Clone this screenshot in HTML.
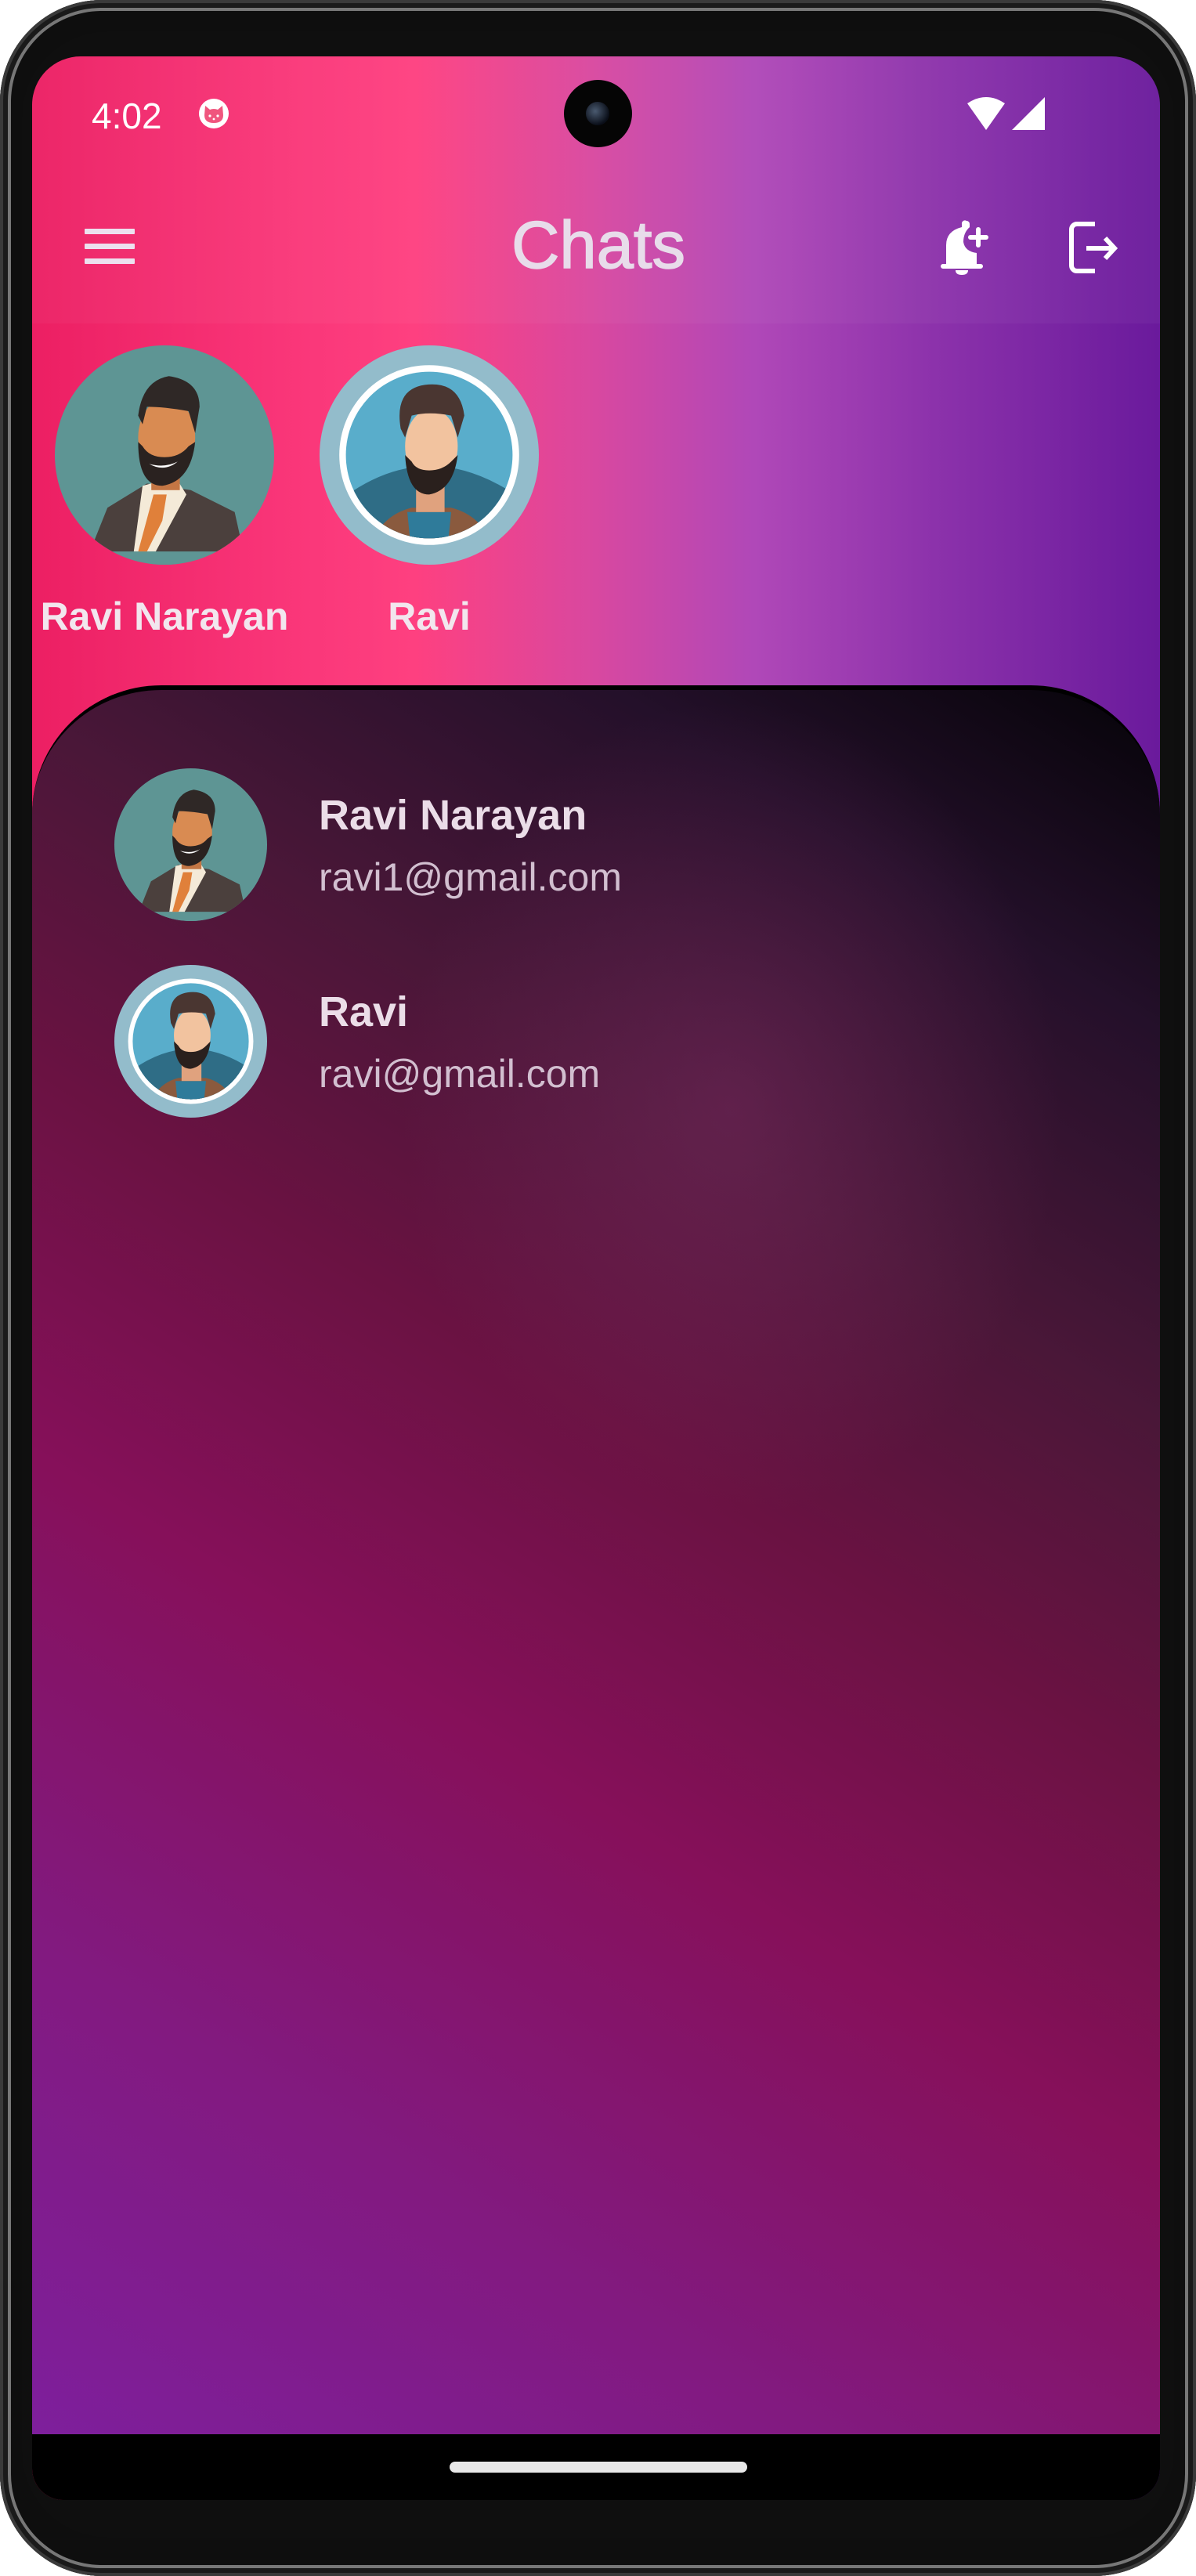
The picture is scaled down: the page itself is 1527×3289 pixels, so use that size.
<!DOCTYPE html>
<html><head><meta charset="utf-8">
<style>
*{margin:0;padding:0;box-sizing:border-box}
html,body{width:1527px;height:3289px;background:#fff;overflow:hidden;font-family:"Liberation Sans",sans-serif}
.body{position:absolute;left:0;top:0;width:1527px;height:3289px;border-radius:130px;background:#0e0e0e;box-shadow:inset 0 0 0 4px #3a3a3a, inset 0 0 0 10px #1a1a1a, inset 0 0 0 14px #777}
.bez{position:absolute;left:28px;top:40px;width:1471px;height:3200px;border-radius:110px;background:#0f0f0f}
.screen{position:absolute;left:41px;top:72px;width:1440px;height:3120px;border-radius:62px 62px 40px 40px;overflow:hidden;background:linear-gradient(90deg,#ec1f63 0%,#f93578 22%,#fe4080 34%,#d848a0 50%,#b048b8 64%,#8c32ab 80%,#6a1a9c 100%)}
.appbar{position:absolute;left:0;top:0;width:1440px;height:341px;background:rgba(255,255,255,0.035)}
.t{position:absolute;line-height:1;white-space:nowrap}
.panel{position:absolute;left:0;top:803px;width:1440px;height:2233px;border-radius:165px 165px 0 0;border-top:6px solid #000;
background:radial-gradient(ellipse 420px 520px at 62% 24%,rgba(140,50,110,0.38),rgba(140,50,110,0) 100%),
linear-gradient(212deg,#050308 0%,#24102a 14%,#4a1738 30%,#6a1242 44%,#86105a 60%,#821a80 80%,#7e1f9c 100%)}
.nav{position:absolute;left:0;top:3036px;width:1440px;height:84px;background:#000}
.pill{position:absolute;left:533px;top:35px;width:380px;height:14px;border-radius:7px;background:#e8e8e8}
</style></head><body>
<div class="body"></div>
<div class="bez"></div>
<div class="screen">
  <div class="appbar"></div>
  <div class="t" style="left:76px;top:53px;font-size:46px;color:#fff">4:02</div>
  <svg style="position:absolute;left:210px;top:51px" width="44" height="44" viewBox="0 0 44 44"><circle cx="22" cy="22" r="19" fill="#fff"/><path d="M10 24 L11 12 L17 17 Q22 15 27 17 L33 12 L34 24 Q34 34 22 34 Q10 34 10 24Z" fill="#f0567e"/><circle cx="17" cy="25" r="1.6" fill="#fff"/><circle cx="27" cy="25" r="1.6" fill="#fff"/><circle cx="22" cy="29" r="1.4" fill="#fff"/></svg>
  <div style="position:absolute;left:679px;top:30px;width:87px;height:86px;border-radius:50%;background:#050505"><div style="position:absolute;left:28px;top:28px;width:30px;height:30px;border-radius:50%;background:radial-gradient(circle at 40% 40%,#4a5a70,#0a0e18 70%)"></div></div>
  <svg style="position:absolute;left:1192px;top:50px" width="104" height="46" viewBox="0 0 104 46"><path d="M2 10 Q26 -6 50 10 L26 44 Z" fill="#fff"/><path d="M101 2 L101 44 L59 44 Z" fill="#fff"/></svg>
  <div style="position:absolute;left:67px;top:220px;width:64px;height:7px;background:#ece0ee;border-radius:1px"></div>
  <div style="position:absolute;left:67px;top:239px;width:64px;height:7px;background:#ece0ee;border-radius:1px"></div>
  <div style="position:absolute;left:67px;top:258px;width:64px;height:7px;background:#ece0ee;border-radius:1px"></div>
  <div class="t" style="left:0;width:1446px;text-align:center;top:199px;font-size:85px;color:#e8dcea;-webkit-text-stroke:1.5px #e8dcea">Chats</div>
  <svg style="position:absolute;left:1159px;top:207px" width="72" height="72" viewBox="0 0 72 72"><path d="M34 3 a4 4 0 0 1 4 4 v4 Q30 18 30 30 Q32 42 47 44 V58 H52 a3 3 0 0 1 0 6 H4 a3 3 0 0 1 0 -6 H8 V34 Q8 16 28 11 V7 a4 4 0 0 1 6 -4Z" fill="#fff"/><path d="M20 66 H36 Q36 72 28 72 Q20 72 20 66Z" fill="#fff"/><rect x="46" y="11" width="6" height="26" rx="3" fill="#fff"/><rect x="36" y="21" width="26" height="6" rx="3" fill="#fff"/></svg>
  <svg style="position:absolute;left:1324px;top:211px" width="66" height="66" viewBox="0 0 66 66"><path d="M33 3 H10 a7 7 0 0 0 -7 7 V56 a7 7 0 0 0 7 7 H33" fill="none" stroke="#fff" stroke-width="6"/><path d="M22 34 H56" stroke="#fff" stroke-width="6"/><path d="M46 21 L58 34 L46 47" fill="none" stroke="#fff" stroke-width="6"/></svg>

  <svg style="position:absolute;left:29px;top:369px" width="280" height="280" viewBox="0 0 100 100">
    <defs><clipPath id="c1"><circle cx="50" cy="50" r="50"/></clipPath></defs>
    <g clip-path="url(#c1)">
    <rect width="100" height="100" fill="#5e9594"/>
    <path d="M16 94 L24 74 L42 63 L62 66 L82 76 L86 94 Z" fill="#4b403d"/>
    <path d="M40 64 L55 60 L60 68 L46 94 L36 94Z" fill="#f4ead8"/>
    <path d="M45 68 L51 68 L49 80 L42 94 L38 94Z" fill="#e0803a"/>
    <rect x="44" y="52" width="13" height="14" fill="#c47644"/>
    <ellipse cx="51" cy="42" rx="13" ry="18" fill="#d98b52"/>
    <path d="M38 44 Q38 64 49 64 Q62 62 64 44 L61 46 Q57 51 50 51 Q43 51 40 46Z" fill="#2a2220"/>
    <path d="M43 54 Q50 58 56 53 Q50 56 43 54Z" fill="#fff"/>
    <path d="M38 32 Q40 16 52 14 Q66 16 66 28 L64 40 L61 30 Q50 28 42 28 L40 36Z" fill="#2f2826"/>
    <rect x="0" y="94" width="100" height="6" fill="#5e9594"/>
    </g></svg>
  <svg style="position:absolute;left:367px;top:369px" width="280" height="280" viewBox="0 0 100 100">
    <defs><clipPath id="c2"><circle cx="50" cy="50" r="38"/></clipPath></defs>
    <circle cx="50" cy="50" r="50" fill="#93bccb"/>
    <circle cx="50" cy="50" r="41" fill="#fff"/>
    <g clip-path="url(#c2)">
    <rect width="100" height="100" fill="#59adcb"/>
    <path d="M10 70 Q50 40 92 70 V100 H10Z" fill="#2f6d86"/>
    <path d="M22 96 Q26 78 42 74 L60 74 Q76 78 80 96Z" fill="#8a5a3e"/>
    <path d="M40 76 H60 L58 96 H42Z" fill="#2f7b9a"/>
    <rect x="44" y="60" width="13" height="16" fill="#e0a27e"/>
    <ellipse cx="51" cy="46" rx="12" ry="17" fill="#f2c39f"/>
    <path d="M39 50 Q40 68 50 68 Q61 66 63 50 L60 53 Q56 57 50 57 Q44 57 42 53Z" fill="#2a201d"/>
    <path d="M37 38 Q34 20 48 18 Q64 16 66 32 L63 42 L60 32 Q50 30 42 32 L39 42Z" fill="#4a3631"/>
    </g></svg>
  <div class="t" style="left:9px;width:320px;text-align:center;top:690px;font-size:50px;font-weight:bold;color:#f2e6ee">Ravi Narayan</div>
  <div class="t" style="left:347px;width:320px;text-align:center;top:690px;font-size:50px;font-weight:bold;color:#f2e6ee">Ravi</div>

  <div class="panel"></div>
  <svg style="position:absolute;left:105px;top:909px" width="195" height="195" viewBox="0 0 100 100">
    <defs><clipPath id="c3"><circle cx="50" cy="50" r="50"/></clipPath></defs>
    <g clip-path="url(#c3)">
    <rect width="100" height="100" fill="#5e9594"/>
    <path d="M16 94 L24 74 L42 63 L62 66 L82 76 L86 94 Z" fill="#4b403d"/>
    <path d="M40 64 L55 60 L60 68 L46 94 L36 94Z" fill="#f4ead8"/>
    <path d="M45 68 L51 68 L49 80 L42 94 L38 94Z" fill="#e0803a"/>
    <rect x="44" y="52" width="13" height="14" fill="#c47644"/>
    <ellipse cx="51" cy="42" rx="13" ry="18" fill="#d98b52"/>
    <path d="M38 44 Q38 64 49 64 Q62 62 64 44 L61 46 Q57 51 50 51 Q43 51 40 46Z" fill="#2a2220"/>
    <path d="M43 54 Q50 58 56 53 Q50 56 43 54Z" fill="#fff"/>
    <path d="M38 32 Q40 16 52 14 Q66 16 66 28 L64 40 L61 30 Q50 28 42 28 L40 36Z" fill="#2f2826"/>
    <rect x="0" y="94" width="100" height="6" fill="#5e9594"/>
    </g></svg>
  <svg style="position:absolute;left:105px;top:1160px" width="195" height="195" viewBox="0 0 100 100">
    <defs><clipPath id="c4"><circle cx="50" cy="50" r="38"/></clipPath></defs>
    <circle cx="50" cy="50" r="50" fill="#93bccb"/>
    <circle cx="50" cy="50" r="41" fill="#fff"/>
    <g clip-path="url(#c4)">
    <rect width="100" height="100" fill="#59adcb"/>
    <path d="M10 70 Q50 40 92 70 V100 H10Z" fill="#2f6d86"/>
    <path d="M22 96 Q26 78 42 74 L60 74 Q76 78 80 96Z" fill="#8a5a3e"/>
    <path d="M40 76 H60 L58 96 H42Z" fill="#2f7b9a"/>
    <rect x="44" y="60" width="13" height="16" fill="#e0a27e"/>
    <ellipse cx="51" cy="46" rx="12" ry="17" fill="#f2c39f"/>
    <path d="M39 50 Q40 68 50 68 Q61 66 63 50 L60 53 Q56 57 50 57 Q44 57 42 53Z" fill="#2a201d"/>
    <path d="M37 38 Q34 20 48 18 Q64 16 66 32 L63 42 L60 32 Q50 30 42 32 L39 42Z" fill="#4a3631"/>
    </g></svg>
  <div class="t" style="left:366px;top:942px;font-size:54px;font-weight:bold;color:#ebdde8">Ravi Narayan</div>
  <div class="t" style="left:366px;top:1023px;font-size:50px;color:#d2bfd0">ravi1@gmail.com</div>
  <div class="t" style="left:366px;top:1193px;font-size:54px;font-weight:bold;color:#ebdde8">Ravi</div>
  <div class="t" style="left:366px;top:1274px;font-size:50px;color:#d2bfd0">ravi@gmail.com</div>

  <div class="nav"><div class="pill"></div></div>
</div>
</body></html>
